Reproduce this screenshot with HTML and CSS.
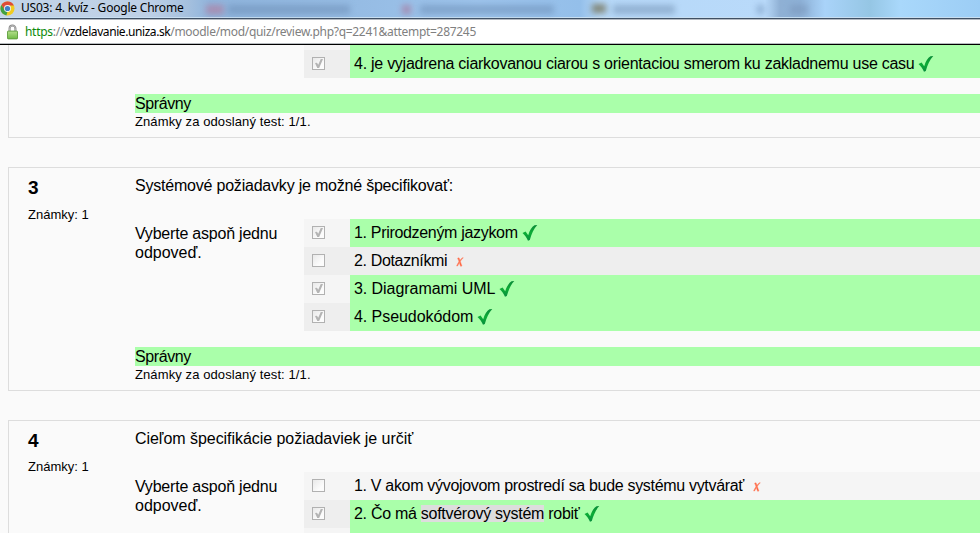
FILE: index.html
```html
<!DOCTYPE html>
<html lang="sk">
<head>
<meta charset="utf-8">
<title>US03: 4. kvíz</title>
<link rel="stylesheet" href="styles.css">
</head>
<body>
<svg class="defs" aria-hidden="true">
  <defs>
    <linearGradient id="tickFill" x1="0" y1="0" x2="0" y2="1"><stop offset="0" stop-color="#0a8a38"/><stop offset=".5" stop-color="#0cae36"/><stop offset="1" stop-color="#078c3e"/></linearGradient>
    <linearGradient id="lockFill" x1="0" y1="0" x2="0" y2="1"><stop offset="0" stop-color="#b4e08c"/><stop offset="1" stop-color="#6fba45"/></linearGradient>
    <symbol id="tick" viewBox="0 0 16 16"><path d="M.5 8 3.600 6.500 6.200 10.200C7.600 5.500 9.800 2 12.500 .3L15.300 .1C11.800 3.800 9.600 9 7.800 15L6 15.800C4.500 12.300 3 10.200 .5 8Z" fill="url(#tickFill)"/></symbol>
    <symbol id="cross" viewBox="0 0 8 10"><path d="M1.600 1.200 3 .8C4 3 4.700 6 6 9L4.600 9.200C3.300 6.500 3 3.500 1.600 1.200ZM7.300.8C5 3 3 6 1.600 9L.6 9C1.800 6 4 3 6.300.8Z" fill="#ff5a36" stroke="#ff8a6c" stroke-width=".5"/></symbol>
  </defs>
</svg>
<header class="titlebar">
  <svg class="chrome" viewBox="0 0 16 16"><circle cx="8" cy="8" r="7.500" fill="#f0cc22"/><path d="M1.500 4.200A7.500 7.500 0 0 1 14.800 4.700H8L4.900 9.700Z" fill="#dd4b39"/><path d="M1.500 4.200 5 9.700 8 11.300 6.800 15.400A7.500 7.500 0 0 1 1.500 4.200Z" fill="#3fa044"/><circle cx="8" cy="8" r="3.700" fill="#f4f4f4"/><circle cx="8" cy="8" r="2.800" fill="#3f7fc9"/></svg>
  <h1 class="window-title"><span class="run t-title">US03: 4. kvíz - Google Chrome</span></h1>
  <div class="behind" aria-hidden="true">
    <i class="smudge s1"></i><i class="smudge s2"></i><i class="smudge s3"></i><i class="smudge s4"></i>
    <i class="smudge s5"></i><i class="smudge s6"></i><i class="smudge s7"></i><i class="smudge s8"></i>
  </div>
</header>
<div class="address">
  <svg class="lock" viewBox="0 0 12 16"><path d="M2.800 8V4.200A3.200 3.200 0 0 1 9.200 4.200V8" fill="none" stroke="#858585" stroke-width="2.200"/><path d="M2.800 8V4.200A3.200 3.200 0 0 1 9.200 4.200V8" fill="none" stroke="#d8d8d8" stroke-width=".7"/><rect x=".5" y="7" width="11" height="8.500" rx=".8" fill="url(#lockFill)" stroke="#5c9d3c"/></svg>
  <span class="run t-url"><span class="scheme">https</span>://<span class="host">vzdelavanie.uniza.sk</span>/moodle/mod/quiz/review.php?q=2241&amp;attempt=287245</span>
</div>
<main class="page">
  <section class="question first">
    <div class="info"></div>
    <div class="content">
      <div class="answers">
        <div class="prompt"></div>
        <div class="options">
          <div class="row sliver right"><div class="box"></div><div class="label"></div></div>
          <div class="row even right"><div class="box"><span class="check on"></span></div><div class="label"><span class="run t-ciara">4. je vyjadrena ciarkovanou ciarou s orientaciou smerom ku zakladnemu use casu</span><svg class="tick"><use href="#tick"/></svg></div></div>
        </div>
      </div>
      <div class="verdict"><span class="run t-ok">Správny</span></div>
      <div class="grade"><span class="run t-grade">Známky za odoslaný test: 1/1.</span></div>
    </div>
  </section>
  <section class="question">
    <div class="info"><h2>3</h2><p><span class="run t-marks">Známky: 1</span></p></div>
    <div class="content">
      <div class="text"><span class="run t-q3">Systémové požiadavky je možné špecifikovať:</span></div>
      <div class="answers">
        <div class="prompt"><span class="run t-p1">Vyberte aspoň jednu</span><br><span class="run t-p2">odpoveď.</span></div>
        <div class="options">
          <div class="row right"><div class="box"><span class="check on"></span></div><div class="label"><span class="run t-a1">1. Prirodzeným jazykom</span><svg class="tick"><use href="#tick"/></svg></div></div>
          <div class="row even"><div class="box"><span class="check"></span></div><div class="label"><span class="run t-a2">2. Dotazníkmi</span><svg class="cross"><use href="#cross"/></svg></div></div>
          <div class="row right"><div class="box"><span class="check on"></span></div><div class="label"><span class="run t-a3">3. Diagramami UML</span><svg class="tick"><use href="#tick"/></svg></div></div>
          <div class="row even right"><div class="box"><span class="check on"></span></div><div class="label"><span class="run t-a4">4. Pseudokódom</span><svg class="tick"><use href="#tick"/></svg></div></div>
        </div>
      </div>
      <div class="verdict"><span class="run t-ok">Správny</span></div>
      <div class="grade"><span class="run t-grade">Známky za odoslaný test: 1/1.</span></div>
    </div>
  </section>
  <section class="question last">
    <div class="info"><h2>4</h2><p><span class="run t-marks">Známky: 1</span></p></div>
    <div class="content">
      <div class="text"><span class="run t-q4">Cieľom špecifikácie požiadaviek je určiť</span></div>
      <div class="answers">
        <div class="prompt"><span class="run t-p1">Vyberte aspoň jednu</span><br><span class="run t-p2">odpoveď.</span></div>
        <div class="options">
          <div class="row"><div class="box"><span class="check"></span></div><div class="label"><span class="run t-b1">1. V akom vývojovom prostredí sa bude systému vytvárať</span><svg class="cross"><use href="#cross"/></svg></div></div>
          <div class="row even right"><div class="box"><span class="check on"></span></div><div class="label"><span class="run t-b2">2. Čo má <mark>softvérový systém</mark> robiť</span><svg class="tick"><use href="#tick"/></svg></div></div>
          <div class="row sliver right"><div class="box"></div><div class="label"></div></div>
        </div>
      </div>
    </div>
  </section>
</main>
</body>
</html>
```
FILE: styles.css
```css
* { box-sizing: border-box; }
body { margin: 0; height: 533px; overflow: hidden; background: #fafafa; color: #000; font: 16px/19px "Liberation Sans", Arial, sans-serif; }
h1, h2, p { margin: 0; }
.defs { position: absolute; width: 0; height: 0; }
.run { display: inline-block; white-space: nowrap; }

.titlebar { position: relative; height: 20px; display: flex; align-items: flex-start; overflow: hidden; border-bottom: 1px solid #b4bac2; box-shadow: inset 0 -1px #3f5064, inset 0 -2px #c8dff2; background: linear-gradient(90deg, #c3d4e8 0, #bdd0e6 150px, #a5c0de 188px, #8fb4dc 210px, #94bae2 330px, #9dc4ec 480px, #94bfea 580px, #b6d8f8 600px, #b9dafa 765px, #8fb0d4 780px, #8db0d6 800px, #a9d3f9 825px, #95c6e4 870px, #a9d8fb 900px, #9ccdf5 980px); }
.chrome { width: 15px; height: 15px; margin-top: 1px; flex: none; }
.window-title { margin-left: 6px; z-index: 1; font: 12px/16px "Noto Sans", sans-serif; }
.behind { position: absolute; inset: 0 0 2px; }
.smudge { position: absolute; filter: blur(3px); height: 9px; top: 5px; background: #6c8db5; opacity: .55; }
.s1 { left: 206px; width: 18px; background: #bc6d8e; }
.s2 { left: 228px; width: 122px; }
.s3 { left: 402px; width: 9px; background: #ad6487; }
.s4 { left: 420px; width: 134px; }
.s5 { left: 592px; width: 14px; top: 4px; background: #6f6b4d; opacity: .75; }
.s6 { left: 613px; width: 62px; background: #7391b3; }
.s7 { left: 757px; width: 7px; }
.s8 { left: 790px; width: 18px; background: #7894b8; }

.address { height: 25px; display: flex; align-items: flex-start; background: #fff; border-bottom: 1px solid #000; box-shadow: inset 0 -1px #b8bcc0; padding-left: 7px; font: 12px/17px "Noto Sans", sans-serif; color: #808080; }
.lock { width: 11px; height: 16px; margin: 4px 7px 0 0; flex: none; }
.address .run { margin-top: 3px; }
.scheme { color: #0b8a0b; }
.host { color: #000; letter-spacing: -.42px; }

.page { padding-left: 8px; }
.question { display: grid; grid-template-columns: 126px 1fr; height: 224px; margin-bottom: 29px; border: 1px solid #ddd; border-right: 0; }
.question.first { height: 93px; border-top: 0; }
.question.last { height: 113px; margin-bottom: 0; border-bottom: 0; }
.info { padding: 9px 0 0 19px; }
.info h2 { font-size: 19px; line-height: 22px; }
.info p { margin-top: 8px; font-size: 13px; line-height: 16px; }
.last .info p { margin-top: 7px; }
.text { height: 51px; padding-top: 8px; }
.answers { display: grid; grid-template-columns: 169px 1fr; }
.prompt { padding-top: 5px; }
.row { display: grid; grid-template-columns: 46px 1fr; height: 28px; background: #f5f5f5; }
.row.even { background: #eee; }
.row.sliver { height: 5px; }
.row.right .label { background: #afa; }
.box { padding: 7px 0 0 8px; }
.row.sliver .box { padding: 0; }
.label { display: flex; align-items: flex-start; padding-left: 4px; }
.label .run { margin-top: 4px; }
.check { display: block; position: relative; width: 13px; height: 13px; border: 1px solid #b1b1b1; background: linear-gradient(135deg, #e9e9e9, #fcfcfc 70%); }
.check.on::after { content: ""; position: absolute; left: 2px; top: 1px; width: 8px; height: 9px; background: #b4b4b4; clip-path: polygon(0 45%, 25% 42%, 40% 65%, 72% 0, 100% 0, 52% 100%, 28% 100%); }
.tick { width: 16px; height: 16px; margin: 6px 0 0 4px; flex: none; }
.cross { width: 8px; height: 10px; margin: 10px 0 0 9px; flex: none; }
.verdict { height: 19px; margin-top: 16px; background: #afa; }
.grade { font-size: 13px; line-height: 17px; }
mark { background: #ddd; color: inherit; }

.t-title { letter-spacing: -.21px; }
.t-url { letter-spacing: -.3px; }
.t-ciara { letter-spacing: -.26px; }
.t-ok { letter-spacing: -.4px; }
.t-grade { letter-spacing: .1px; }
.t-q3 { letter-spacing: -.21px; }
.t-q4 { letter-spacing: -.05px; }
.t-p1 { letter-spacing: -.21px; }
.t-a1 { letter-spacing: -.32px; }
.t-a2 { letter-spacing: -.35px; }
.t-a3, .t-a4 { letter-spacing: -.06px; }
.t-b1 { letter-spacing: -.315px; }
.t-b2 { letter-spacing: -.28px; }
```
